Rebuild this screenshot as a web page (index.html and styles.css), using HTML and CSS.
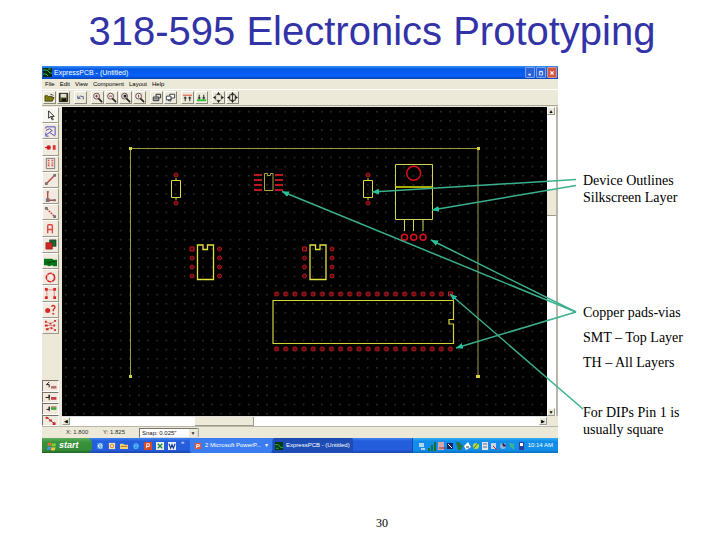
FILE: index.html
```html
<!DOCTYPE html>
<html lang="en">
<head>
<meta charset="utf-8">
<title>318-595 Electronics Prototyping</title>
<link rel="stylesheet" href="styles.css">
</head>
<body>
<main class="slide">
<h1 class="slide-title">318-595 Electronics Prototyping</h1>
<div class="figure">
<section class="window">
<header class="titlebar">
<svg class="app-icon" viewBox="0 0 9 9"><path fill="#06280c" d="M0 0h9v9H0z"/><path stroke="#32b548" fill="none" d="M0 2h4l3 3h2M0 6h3l2 2M5 1h3"/></svg>
<span class="caption">ExpressPCB - (Untitled)</span>
<button class="win-btn" aria-label="Minimize"><svg viewBox="0 0 10 10"><path stroke="#fff" stroke-width="2" d="M3 7h3"/></svg></button>
<button class="win-btn" aria-label="Maximize"><svg viewBox="0 0 10 10"><path stroke="#fff" fill="none" d="M3 3.500h4v4H3zM3 3h4"/></svg></button>
<button class="win-btn close" aria-label="Close"><svg viewBox="0 0 10 10"><path stroke="#fff" stroke-width="1.500" d="M3 3l4 4M7 3l-4 4"/></svg></button>
</header>
<nav class="menu">
<button>File</button><button>Edit</button><button>View</button><button>Component</button><button>Layout</button><button>Help</button>
</nav>
<div class="toolbar">
<div class="group">
<button aria-label="Open"><svg viewBox="0 0 12 12"><path fill="#7b7b12" stroke="#222208" stroke-width=".7" d="M1 10V4h3l1 1h4v1h2l-2 4z"/><path stroke="#222" fill="none" d="M7 3q2-1 3 1"/></svg></button>
<button aria-label="Save"><svg viewBox="0 0 12 12"><path fill="#63631a" stroke="#111" d="M1.500 1.500h9v9h-9z"/><path fill="#ddd" d="M3 2h6v4H3z"/><path fill="#111" d="M4 7h5v3H4z"/></svg></button>
</div>
<div class="group">
<button aria-label="Undo"><svg viewBox="0 0 12 12"><path stroke="#4a5596" fill="none" d="M3 4v3h3M3 7q3-4 6-2v3"/></svg></button>
</div>
<div class="group">
<button aria-label="Zoom in"><svg viewBox="0 0 12 12"><circle cx="5" cy="4.500" r="3.200" fill="#eee" stroke="#644"/><path stroke="#822" d="M3.500 4.500h3M5 3v3"/><path stroke="#222" stroke-width="1.700" d="M7 7l4 4"/></svg></button>
<button aria-label="Zoom out"><svg viewBox="0 0 12 12"><circle cx="5" cy="4.500" r="3.200" fill="#eee" stroke="#644"/><path stroke="#822" d="M3.500 4.500h3"/><path stroke="#222" stroke-width="1.700" d="M7 7l4 4"/></svg></button>
<button aria-label="Zoom area"><svg viewBox="0 0 12 12"><circle cx="5" cy="4.500" r="3.200" fill="#eee" stroke="#644"/><path fill="#222" d="M4 3h3v3H4z"/><path stroke="#222" stroke-width="1.700" d="M7 7l4 4"/></svg></button>
<button aria-label="Zoom previous"><svg viewBox="0 0 12 12"><circle cx="5" cy="4.500" r="3.200" fill="#eee" stroke="#644"/><path stroke="#822" d="M5 3v3"/><path stroke="#222" stroke-width="1.700" d="M7 7l4 4"/></svg></button>
</div>
<div class="group">
<button aria-label="Component properties"><svg viewBox="0 0 12 12"><path fill="#ddd" stroke="#222" d="M2.500 5.500h6v4h-6zM5.500 5V2.500h5v4H9M3.500 7.500h4"/></svg></button>
<button aria-label="Layout properties"><svg viewBox="0 0 12 12"><path fill="#fff" stroke="#334" d="M1.500 4.500h5v4h-5zM5 4V2.500h5.500v4H7M3 9l3 1 1-3"/></svg></button>
</div>
<div class="group">
<button aria-label="Top layer"><svg viewBox="0 0 12 12"><path stroke="#e23a30" d="M1 3.500h10"/><path stroke="#111" fill="none" d="M3.500 10V5M8.500 10V5M2 6.500h3M7 6.500h3"/></svg></button>
<button aria-label="Bottom layer"><svg viewBox="0 0 12 12"><path stroke="#20c62a" stroke-width="2" d="M1 9h10"/><path stroke="#111" fill="none" d="M3.500 3v5M8.500 3v5M2 6.500h3M7 6.500h3"/></svg></button>
</div>
<div class="group">
<button aria-label="Pan"><svg viewBox="0 0 12 12"><path fill="#111" d="M6 0l2 3H4zM6 12l2-3H4zM0 6l3-2v4zM12 6L9 4v4z"/><path stroke="#444" stroke-dasharray="1 1" fill="none" d="M3 3h6v6H3z"/></svg></button>
<button aria-label="Center"><svg viewBox="0 0 12 12"><path fill="#111" d="M6 0l2 3H4zM6 12l2-3H4zM0 6l3-2v4zM12 6L9 4v4z"/><path stroke="#333" fill="none" d="M6 2v8M3 3h6v6H3z"/></svg></button>
</div>
</div>
<div class="workspace">
<aside class="sidebar">
<div class="tools">
<button class="active" aria-label="Select"><svg viewBox="0 0 14 14"><path fill="#fff" stroke="#222" d="M5 2v8l2-2 2 4 1-1-2-3h3z"/></svg></button>
<button aria-label="Zoom"><svg viewBox="0 0 14 14"><path fill="none" stroke="#4646b4" d="M2 4V2h10v9M2 11l4-3M2 6l4-2 3 2-3 2 6 4M2 8v4h3"/></svg></button>
<button aria-label="Pad"><svg viewBox="0 0 14 14"><circle cx="5" cy="7" r="2.400" fill="#cf1d22"/><path stroke="#cf1d22" d="M1 7h3"/><path fill="#d83232" d="M9.500 4.500h3v5h-3z"/></svg></button>
<button aria-label="Component"><svg viewBox="0 0 14 14"><path fill="none" stroke="#777" d="M2.500 1.500h9v11h-9z"/><path stroke="#c33" stroke-dasharray="1 1" stroke-width="2" d="M5 3v8M9 3v8"/></svg></button>
<button aria-label="Trace"><svg viewBox="0 0 14 14"><path stroke="#bd4545" stroke-width="1.500" d="M3 11l8-8"/><path fill="#777" d="M1 10h3v3H1zM10 1h3v3h-3z"/></svg></button>
<button aria-label="Corner"><svg viewBox="0 0 14 14"><path fill="none" stroke="#bd4545" stroke-width="1.500" d="M4 1v10h8"/><path fill="#777" d="M2 9h4v4H2zM10 10h3v2h-3zM3 1h2v2H3z"/></svg></button>
<button aria-label="Disconnect"><svg viewBox="0 0 14 14"><path stroke="#bd4545" stroke-width="1.500" stroke-dasharray="2 1" d="M3 3l8 8"/><path fill="#777" d="M1 1h3v3H1zM10 10h3v3h-3z"/></svg></button>
<button aria-label="Text"><svg viewBox="0 0 14 14"><path fill="none" stroke="#df4545" stroke-width="1.500" d="M4 12V4q0-1 1-1h3q1 0 1 1v8M4 8h5"/></svg></button>
<button aria-label="Plane"><svg viewBox="0 0 14 14"><path fill="#176c2d" stroke="#111" stroke-width=".5" d="M6 2h7v7H6z"/><path fill="#d32822" stroke="#511" stroke-width=".5" d="M2 5h7v7H2z"/></svg></button>
<button aria-label="Filled plane"><svg viewBox="0 0 14 14"><path fill="#057317" d="M0 4h9l1 1h4v7h-4l-1-1-4 1-2-1H0z"/><path stroke="#043a0b" d="M3 8h5M9 7h3"/></svg></button>
<button aria-label="Circle"><svg viewBox="0 0 14 14"><circle cx="7" cy="7" r="4.500" fill="none" stroke="#d42a2a" stroke-width="1.700" stroke-dasharray="5 .7"/></svg></button>
<button aria-label="Rectangle"><svg viewBox="0 0 14 14"><path stroke="#d42a2a" stroke-dasharray="1 1" fill="none" d="M3 11V3h8v8"/><path fill="#d42a2a" d="M1 1h3v3H1zM10 1h3v3h-3zM1 10h3v3H1zM10 10h3v3h-3z"/></svg></button>
<button aria-label="Pad information"><svg viewBox="0 0 14 14"><circle cx="4" cy="8" r="2.700" fill="#d42a2a"/><path fill="none" stroke="#d42a2a" stroke-width="1.500" d="M8 4q1-2 3-1 2 2-1 4v2M9 11.500h2"/></svg></button>
<button aria-label="Highlight net"><svg viewBox="0 0 14 14"><path stroke="#d48a8a" fill="none" d="M2 3l5 2 5-3M2 7h9M3 11l5-2 4 3"/><path fill="#d42a2a" d="M1 2h2v2H1zM6 4h2v2H6zM11 1h2v2h-2zM1 6h3v2H1zM10 6h2v2h-2zM2 10h3v2H2zM7 9h2v2H7zM11 11h2v2h-2z"/></svg></button>
</div>
<div class="layers">
<button aria-label="Silkscreen layer"><svg viewBox="0 0 14 10"><path stroke="#111" fill="none" d="M5 1L2 4h3v3"/><path stroke="#ba7467" stroke-width="3" d="M7 7h6"/></svg></button>
<button aria-label="Top copper"><svg viewBox="0 0 14 10"><path stroke="#111" fill="none" d="M1 5h4V2v6"/><path stroke="#c93b43" stroke-width="3" d="M7 6h6"/></svg></button>
<button aria-label="Bottom copper"><svg viewBox="0 0 14 10"><path stroke="#111" fill="none" d="M2 6h3V3v5"/><path stroke="#43a343" stroke-width="3" d="M7 5h6"/><path stroke="#c77" d="M7 3h6"/></svg></button>
<button aria-label="Snap to grid"><svg viewBox="0 0 14 10"><path stroke="#555" fill="none" d="M2 1l9 8"/><path fill="#c22" d="M1 1h3v2H1zM5 4h3v2H5zM9 7h3v3H9z"/></svg></button>
</div>
</aside>
<div class="canvas">
<svg class="board" viewBox="62 107 485 309" preserveAspectRatio="none" role="img" aria-label="Circuit board layout">
<defs>
<pattern id="dots" x="134.400" y="153" width="9.150" height="9.150" patternUnits="userSpaceOnUse"><path fill="#686868" d="M4 4h1v1H4z"/></pattern>
<g id="pad"><circle r="2" fill="#3a0000" stroke="#b81822"/><path stroke="#d22" stroke-width=".6" d="M-1 0h2"/></g>
<g id="square"><path fill="#400" stroke="#c81822" d="M-2-2h4v4h-4z"/></g>
<pattern id="pads" x="272" y="0" width="9.150" height="6" patternUnits="userSpaceOnUse"><use href="#pad" x="4.600" y="3"/></pattern>
<g id="dip"><path fill="none" stroke="#e4e43c" stroke-width="1.300" d="M0 0h5.500v4.500H10V0h6v34.500H0z"/><use href="#square" x="-5.500" y="4"/><use href="#pad" x="-5.500" y="13"/><use href="#pad" x="-5.500" y="22"/><use href="#pad" x="-5.500" y="31"/><use href="#pad" x="22" y="4"/><use href="#pad" x="22" y="13"/><use href="#pad" x="22" y="22"/><use href="#pad" x="22" y="31"/></g>
<g id="axial"><path fill="none" stroke="#dada3c" d="M-4.500-8.500h9v17h-9zM0-11v2M0 8v3"/><use href="#pad" y="-14"/><use href="#pad" y="14"/></g>
</defs>
<path d="M62 107h485v309H62z"/>
<path fill="url(#dots)" d="M62 107h485v309H62z"/>
<path fill="none" stroke="#9b9b38" d="M130.500 376V148.500H478.500"/>
<path fill="none" stroke="#6c6732" stroke-width="1.500" d="M478 149v227"/>
<path fill="#d4d441" d="M129 147h3v3h-3zM477 147h3v3h-3zM129 375h3v3h-3zM476 375h4v3h-4z"/>
<use href="#axial" x="176" y="189"/>
<use href="#axial" x="368" y="189"/>
<path fill="none" stroke="#a9a941" d="M264.500 173.500h3v2h3v-2h2.500v17h-8.500z"/>
<path stroke="#bd1820" stroke-width="2" d="M254 175h8M254 180h8M254 185h8M254 190h8M275 175h8M275 180h8M275 185h8M275 190h8"/>
<path fill="none" stroke="#d3d35b" d="M395.500 164.500h37v55h-37zM404.500 220v11M413.500 220v11M423 220v11"/>
<path stroke="#e5e500" stroke-width="1.500" d="M395 187h38"/>
<g fill="none" stroke="#da1119" stroke-width="1.500"><circle cx="413.700" cy="173.300" r="7"/><circle cx="404.500" cy="237.300" r="3"/><circle cx="413.700" cy="237.300" r="3"/><circle cx="423" cy="237.300" r="3"/></g>
<use href="#dip" x="197.500" y="245"/>
<use href="#dip" x="310" y="245"/>
<path fill="none" stroke="#d5d53c" stroke-width="1.200" d="M273 300.500h180.500v19H449v4.500h4.500v19.500H273z"/>
<g transform="translate(0 291)"><path fill="url(#pads)" d="M272 0h174v6H272z"/></g>
<g transform="translate(0 346)"><path fill="url(#pads)" d="M272 0h183v6H272z"/></g>
<use href="#square" x="450.500" y="294"/>
</svg>
<div class="vscroll"><button aria-label="Scroll up">▲</button><span class="vthumb"></span><button aria-label="Scroll down">▼</button></div>
<div class="hscroll"><button aria-label="Scroll left">◀</button><span class="hthumb"></span><button aria-label="Scroll right">▶</button></div>
</div>
</div>
<div class="status">
<span class="coord">X: 1.800</span><span class="coord">Y: 1.825</span>
<select aria-label="Snap"><option>Snap: 0.025"</option></select>
<span class="arrow" aria-hidden="true">▼</span>
<span class="rule"></span>
</div>
<footer class="taskbar">
<button class="start"><svg viewBox="0 0 10 10"><path fill="#ea6a36" d="M1 2q2-1 3.500 0L4 5Q3 4 .500 5z"/><path fill="#7bcf3e" d="M5 2q2 1 4 0l-.5 3Q6 6 4.500 5z"/><path fill="#4c91ee" d="M.500 6q2-1 3.500 0L3.500 9Q2 8 0 9z"/><path fill="#f2c83c" d="M4.500 6q2 1 4 0L8 9Q6 10 4 9z"/></svg>start</button>
<div class="quick">
<svg viewBox="0 0 9 9"><path fill="#3d8be4" d="M1 1h7v7H1z"/><path fill="none" stroke="#e7f5ff" d="M2 4.500h5Q6 1 4 2 2 3 3 6q2 2 4 0"/></svg>
<svg viewBox="0 0 9 9"><path fill="#f1e2bd" d="M1 1h7v7H1z"/><circle cx="4.500" cy="4.500" r="2" fill="none" stroke="#dd7821"/></svg>
<svg viewBox="0 0 9 9"><path fill="#f2cf71" d="M0 2h4l1 1h4v5H0z"/><path stroke="#ad731c" d="M1 5h7"/></svg>
<svg viewBox="0 0 9 9"><path fill="none" stroke="#50baf3" stroke-width="1.500" d="M2 4.500h5Q6 1 4 2 1 3 3 7q2 1 4-1"/></svg>
<svg viewBox="0 0 9 9"><path fill="#d44d29" d="M0 0h9v9H0z"/><path fill="none" stroke="#fff" d="M3 7V2h3v3H3"/></svg>
<svg viewBox="0 0 9 9"><path fill="#e6f0df" d="M0 0h9v9H0z"/><path stroke="#26804a" stroke-width="1.500" d="M2 2l5 5M7 2L2 7"/></svg>
<svg viewBox="0 0 9 9"><path fill="#e9efff" d="M0 0h9v9H0z"/><path fill="none" stroke="#173494" stroke-width="1.300" d="M1 2l2 5 1.500-4L6 7l2-5"/></svg>
</div>
<span class="chevron">»</span>
<button class="task"><svg viewBox="0 0 9 9"><path fill="#db5832" d="M1 1h7v7H1z"/><path fill="none" stroke="#fff" d="M3 7V3h3v2H3"/></svg><span>2 Microsoft PowerP...</span><span class="more">▾</span></button>
<button class="task current"><svg viewBox="0 0 9 9"><path fill="#07380f" d="M0 0h9v9H0z"/><path fill="none" stroke="#2cc046" d="M0 3h4l2 3h3M1 7h3"/></svg><span>ExpressPCB - (Untitled)</span></button>
<div class="tray">
<svg class="tray-icons" viewBox="0 0 108 10"><path fill="#b5d5f4" d="M1 2h5v4H1zM3 7h4v2H3z"/><path fill="#156f35" d="M10 7h2v3h-2zM13 4h2v6h-2zM16 1h2v9h-2z"/><path fill="#d7a6aa" d="M20 1h6v8h-6z"/><path stroke="#913948" d="M21 7h7"/><path fill="#172463" d="M29 2h6v6h-6z"/><path stroke="#fff" d="M30 3l4 4"/><path fill="#267540" d="M38 1h3l4 4-2 4h-3z"/><path fill="#fff" d="M46 5l4-4 3 5-5 3z"/><path stroke="#333" d="M48 6h3"/><circle cx="58" cy="5" r="3" fill="#bddc37"/><path stroke="#3d752a" d="M56 7l4-5"/><path fill="#e4e5f2" d="M64 1h6v8h-6z"/><path stroke="#596593" d="M65 3h4M65 6h4"/><path fill="#cad2e9" d="M73 2h5v6h-5z"/><path stroke="#c22" d="M75 5l4 4"/><circle cx="85" cy="5" r="3" fill="#9bb0cf"/><path stroke="#333e75" d="M85 2v3h3"/><path stroke="#42b58b" stroke-width="2" d="M92 2l4 6M96 3l-4 3"/><path fill="#303d9a" d="M101 1h5v8h-5z"/><path fill="#fff" d="M102 2h3v3h-3z"/></svg>
<time>10:14 AM</time>
</div>
</footer>
</section>
<div class="notes">
<p>Device Outlines<br>Silkscreen Layer</p>
<p class="copper">Copper pads-vias</p>
<p>SMT – Top Layer</p>
<p>TH – All Layers</p>
<p class="dips">For DIPs Pin 1 is<br>usually square</p>
</div>
<svg class="callouts" viewBox="42 66 653 387" preserveAspectRatio="none" aria-hidden="true">
<defs><marker id="tip" viewBox="0 0 7 6" refX="7" refY="3" markerWidth="7" markerHeight="6" markerUnits="userSpaceOnUse" orient="auto"><path fill="#27c29a" d="M0 0l7 3-7 3z"/></marker></defs>
<g stroke="#3bb08e" stroke-width="1.500">
<path marker-end="url(#tip)" d="M576 179.500L372 192"/>
<path marker-end="url(#tip)" d="M576 185.500L432 210"/>
<path marker-end="url(#tip)" d="M576 312L282 191.500"/>
<path marker-end="url(#tip)" d="M576 312L431 240"/>
<path marker-end="url(#tip)" d="M576 312L456 348"/>
<path marker-end="url(#tip)" d="M583 409L450 294"/>
</g>
</svg>
</div>
<footer class="page-number">30</footer>
</main>
</body>
</html>
```
FILE: styles.css
```css
* { box-sizing: border-box; }
body { margin: 0; background: #fff; color: #000; font-family: "Liberation Serif", "Times New Roman", serif; }
button { border: 0; padding: 0; margin: 0; background: none; font: inherit; color: inherit; }
svg { display: block; }
.slide-title { margin: 0; padding: 8px 0 12px 24px; font: 40px/46px "Liberation Sans", Arial, sans-serif; color: #3333a8; text-align: center; }
.figure { position: relative; display: grid; grid-template-columns: minmax(0, 1fr) 112px; column-gap: 25px; margin: 0 25px 0 42px; }
.callouts { position: absolute; inset: 0; width: 100%; height: 100%; pointer-events: none; }
.window { background: #ece9d8; font: 6px/9px "Liberation Sans", Arial, sans-serif; }

.titlebar { display: flex; align-items: center; gap: 1px; height: 13px; padding: 0 1px; background: linear-gradient(#3a90f4, #0559e4 25%, #0660fa 75%, #0344b5); color: #fff; }
.app-icon { width: 9px; height: 9px; }
.caption { flex: 1; padding-left: 1px; font-size: 7px; }
.win-btn { width: 10px; height: 11px; border: 1px solid #7aa2ee; border-radius: 1px; background: #2c62d8; }
.win-btn svg { width: 100%; }
.win-btn.close { background: #d2553f; border-color: #dc9488; }
.menu { display: flex; gap: 5px; height: 11px; padding: 0 3px; border-bottom: 1px solid #fff; }
.toolbar { display: flex; gap: 4px; height: 16px; padding: 1px; border-bottom: 1px solid #aca899; }
.group { display: flex; gap: 1px; }
.group button { width: 13px; height: 13px; border: 1px solid; border-color: #fff #8c897c #8c897c #fff; }
.group svg { width: 11px; height: 11px; }

.workspace { display: flex; padding-top: 1px; }
.sidebar { display: flex; flex-direction: column; justify-content: space-between; width: 20px; padding-right: 3px; }
.tools { display: grid; grid-auto-rows: 1fr; height: 227px; }
.layers { display: grid; grid-auto-rows: 1fr; height: 46px; }
.tools button, .layers button { display: grid; place-items: center; border: 1px solid; border-color: #fff #9c988a #9c988a #fff; background: #f3eadf; }
.tools svg { width: 13px; height: 13px; }
.layers svg { width: 14px; height: 9px; }
.tools .active { background: #f8f7f2; }
.layers button { border-color: #77756b #fff #fff #77756b; }
.canvas { flex: 1; display: grid; grid-template-columns: minmax(0, 1fr) 11px; min-width: 0; }
.board { width: 100%; height: 309px; }
.vscroll, .hscroll { display: flex; background: #fff; font-size: 5px; line-height: 8px; }
.vscroll { flex-direction: column; border-right: 2px solid #b9b6a8; }
.hscroll { height: 10px; border-top: 1px solid #ddd; }
.vscroll button, .hscroll button { width: 8px; height: 8px; background: #ece9d8; border: 1px solid; border-color: #fff #9c988a #9c988a #fff; line-height: 6px; text-align: center; }
.vthumb { height: 26px; margin: 75px 0 auto; background: #ece9d8; border-bottom: 1px solid #9c988a; }
.hthumb { width: 59px; margin: 0 auto 0 125px; background: #ece9d8; border-right: 1px solid #9c988a; border-bottom: 1px solid #9c988a; }
.status { display: flex; align-items: center; height: 12px; padding-left: 21px; border-top: 1px solid #b9b6a8; color: #333; }
.coord { width: 37px; padding-left: 3px; }
.status select { appearance: none; width: 59px; height: 10px; margin-left: 2px; padding: 0 2px; border: 1px solid; border-color: #77756b #ddd #ddd #77756b; border-radius: 0; background: #fff; font: inherit; line-height: 8px; color: #111; }
.arrow { width: 8px; height: 8px; margin-left: -9px; background: #ece9d8; font-size: 5px; line-height: 8px; text-align: center; pointer-events: none; z-index: 1; }
.rule { width: 1px; height: 9px; margin-left: 1px; background: #aca899; }

.taskbar { display: flex; align-items: stretch; height: 15px; background: linear-gradient(#3f82ef, #255edc 20%, #245cdc 80%, #1b45a8); color: #fff; }
.taskbar button { display: flex; align-items: center; }
.start { width: 50px; gap: 2px; padding-left: 5px; border-radius: 0 5px 5px 0; background: linear-gradient(#5dad5c, #38913b 30%, #348c37 80%, #216425); }
.taskbar .start { font: italic bold 9px/13px "Liberation Sans", Arial, sans-serif; }
.start svg { width: 10px; height: 10px; }
.quick { display: flex; align-items: center; gap: 4px; margin-left: 4px; }
.quick svg { width: 8px; height: 8px; }
.chevron { width: 14px; padding-left: 5px; }
.task { width: 82px; gap: 3px; padding: 0 4px; border-radius: 2px; background: #3b7df0; white-space: nowrap; }
.task svg { flex: none; width: 8px; height: 8px; }
.taskbar .current { width: 80px; margin-left: 1px; padding: 0 2px; background: #1c4cb4; }
.more { margin-left: auto; }
.tray { display: flex; align-items: center; width: 146px; margin-left: auto; padding: 0 5px; justify-content: space-between; border-left: 1px solid #1848ae; background: linear-gradient(#35b0f4, #118ee9 20%, #118ee9 80%, #0b6fc0); white-space: nowrap; }
.tray-icons { width: 108px; height: 10px; }

.notes { padding-top: 106px; font-size: 14px; line-height: 17px; white-space: nowrap; }
.notes p { margin: 0 0 8px; }
.notes .copper { margin-top: 98px; }
.notes .dips { margin-top: 33px; }
.page-number { padding: 62px 0 0 44px; text-align: center; font-size: 12px; line-height: 16px; }
```
